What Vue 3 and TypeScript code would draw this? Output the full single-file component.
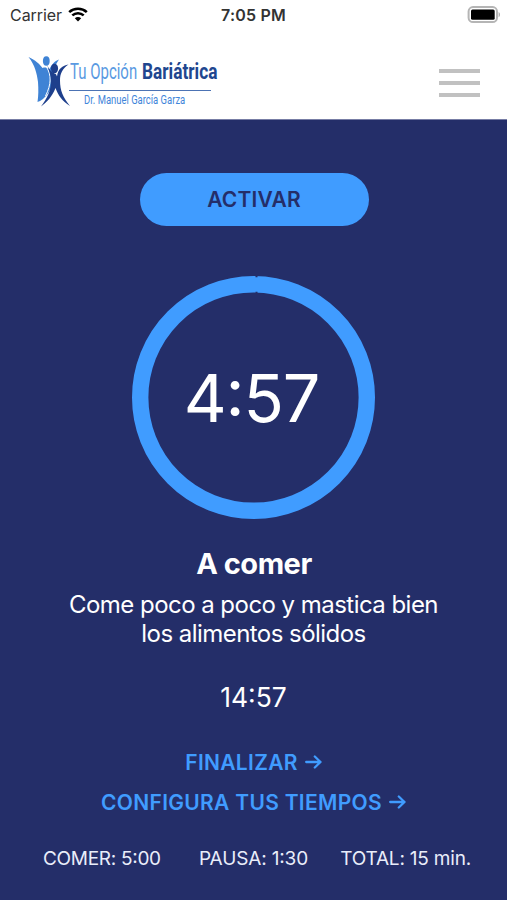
<script setup lang="ts">
import { ref } from 'vue'

interface Setting {
  key: string
  label: string
  value: string
}

const remaining = ref('4:57')
const total = ref('14:57')
const settings: Setting[] = [
  { key: 'eat', label: 'COMER', value: '5:00' },
  { key: 'pause', label: 'PAUSA', value: '1:30' },
  { key: 'whole', label: 'TOTAL', value: '15 min.' },
]

// Splits a clock value so that its colon can be centred on the digits.
const parts = (value: string): string[] => value.split(/(:)/)
</script>

<template>
  <div class="screen">
    <header class="header">
      <div class="status">
        <div class="carrier">
          <span>Carrier</span>
          <svg class="wifi" width="20" height="15" viewBox="0 0 20 15">
            <path d="M1.2 5.1C6 .7 14 .7 18.8 5.1" />
            <path d="M4.3 8.4c3.2-2.9 8.2-2.9 11.4 0" />
            <path class="dot" d="M6.8 11.2c1.8-1.6 4.6-1.6 6.4 0L10 14.4z" />
          </svg>
        </div>
        <span class="clock">7:05 PM</span>
        <svg class="battery" width="34" height="18" viewBox="0 0 34 18">
          <rect class="shell" x="1.6" y="1.1" width="28.4" height="15" rx="4.4" />
          <rect x="4" y="3.500" width="23.700" height="10.200" rx="1.500" />
          <path class="cap" d="M31.600 6c1.800.9 1.800 4.300 0 5.200z" />
        </svg>
      </div>
      <div class="nav">
        <div class="brand">
          <svg class="figures" width="42" height="53" viewBox="0 0 42 53">
            <g class="figure-light">
              <path d="M.5 2c7 3 11 7 14 11 3-1 5 0 7 1 2-4 5-8 9.500-9.500-2 3-4 6-5 10v12c-3 9-7 14-11 17.500-2 1.500-4 2.500-5.500 3 1-6 1-13 .5-20C9 19 7 10 .5 2z" />
              <ellipse cx="18.300" cy="6" rx="3.400" ry="4.700" />
            </g>
            <path class="gap" d="M18.500 12c5 8 5 17-1 29" />
            <g class="figure-dark">
              <ellipse cx="26.500" cy="13.500" rx="3.600" ry="4.800" />
              <path d="M19 10c2 4 4 7 7.500 8.500 1.500 0 2 1.500 2.500 3 1-8 5.500-11 11.500-12-6 4-8.500 9-8.500 16 0 10 3 17 10 25.500-8-5-12-11-14.500-18C24 42 19 47 13 51.500c6-8 10-16 10-25C23 20 21 15 19 10z" />
            </g>
          </svg>
          <div class="wordmark">
            <div class="name"><span class="thin">Tu Opción</span><b>Bariátrica</b></div>
            <span class="rule"></span>
            <span class="doctor">Dr. Manuel García Garza</span>
          </div>
        </div>
        <button class="menu" aria-label="Menú"><i /><i /><i /></button>
      </div>
    </header>

    <main class="content">
      <button class="activate">ACTIVAR</button>
      <div class="timer">
        <svg class="ring" width="243" height="243" viewBox="0 0 243 243">
          <circle cx="121.500" cy="121.500" r="113.300" />
          <path d="M124.500 0v1.200M124.500 15.800v1.200" />
        </svg>
        <span class="remaining"><span v-for="(p, i) in parts(remaining)" :key="i" :class="{ colon: p === ':' }">{{ p }}</span></span>
      </div>
      <h1 class="title">A comer</h1>
      <p class="hint">Come poco a poco y mastica bien<br />los alimentos sólidos</p>
      <div class="total"><span v-for="(p, i) in parts(total)" :key="i" :class="{ colon: p === ':' }">{{ p }}</span></div>
      <button class="link finish">
        <span>FINALIZAR</span>
        <svg width="17" height="14" viewBox="0 0 17 14"><path d="M1.200 7H15.500M9.800 1.500l5.700 5.500-5.700 5.500" /></svg>
      </button>
      <button class="link configure">
        <span>CONFIGURA TUS TIEMPOS</span>
        <svg width="17" height="14" viewBox="0 0 17 14"><path d="M1.200 7H15.500M9.800 1.500l5.700 5.500-5.700 5.500" /></svg>
      </button>
      <footer class="settings">
        <span v-for="s in settings" :key="s.key" :class="s.key">{{ s.label }}: <span v-for="(p, i) in parts(s.value)" :key="i" :class="{ colon: p === ':' }">{{ p }}</span></span>
      </footer>
    </main>
  </div>
</template>

<style>
body {
  margin: 0;
  background: #242e69;
}
</style>

<style scoped>
.screen {
  width: 507px;
  height: 900px;
  overflow: hidden;
  display: flex;
  flex-direction: column;
  font-family: Inter, sans-serif;
  background: #242e69;
}
button {
  border: 0;
  padding: 0;
  background: none;
  font: inherit;
}
.header {
  flex: none;
  height: 120px;
  box-sizing: border-box;
  background: #fff;
  border-bottom: 1px solid #777da5;
}
.status {
  height: 30px;
  display: grid;
  grid-template-columns: 1fr auto 1fr;
  align-items: center;
  padding: 0 6px 0 10px;
  color: #333;
  font-size: 16px;
  line-height: 30px;
}
.carrier {
  display: flex;
  align-items: center;
  gap: 6px;
  letter-spacing: -0.05px;
}
.wifi {
  margin-top: -2px;
  fill: none;
  stroke: #000;
  stroke-width: 2.6;
}
.wifi .dot {
  fill: #000;
  stroke: none;
}
.clock {
  font-weight: 600;
  letter-spacing: 0.2px;
  margin-right: 4px;
}
.battery {
  justify-self: end;
  margin-top: -1px;
}
.battery .shell {
  fill: none;
  stroke: #b5b5b5;
  stroke-width: 2;
}
.battery .cap {
  fill: #aaa;
}
.nav {
  display: flex;
  justify-content: space-between;
  align-items: flex-start;
  padding: 25px 27px 0 28px;
}
.brand {
  display: flex;
  align-items: flex-start;
}
.figures {
  flex: none;
}
.figure-light {
  fill: #3f83d5;
}
.figure-dark {
  fill: #1e3f8c;
}
.gap {
  fill: none;
  stroke: #fff;
  stroke-width: 1;
}
.wordmark {
  width: 150px;
  display: flex;
  flex-direction: column;
  align-items: flex-start;
  font-family: Roboto, sans-serif;
  white-space: nowrap;
}
.name {
  display: flex;
  font-size: 22px;
  line-height: 26px;
  padding-top: 4px;
  color: #21468f;
}
.name b {
  transform: scaleX(0.785);
  transform-origin: 0 0;
}
.thin {
  width: 72px;
  font-weight: 400;
  color: #5a9ae2;
  transform: scaleX(0.68);
  transform-origin: 0 0;
}
.rule {
  width: 142px;
  height: 1px;
  margin-top: 5px;
  margin-left: -1px;
  background: #4c73b4;
}
.doctor {
  margin-left: 14px;
  font-size: 13.500px;
  line-height: 16px;
  color: #3f86da;
  transform: scaleX(0.7);
  transform-origin: 0 0;
}
.menu {
  display: flex;
  flex-direction: column;
  gap: 8px;
  margin-top: 14px;
}
.menu i {
  width: 41px;
  height: 4px;
  background: #c1c1c1;
}
.content {
  display: flex;
  flex-direction: column;
  align-items: center;
  padding-top: 53px;
  color: #fff;
}
.activate {
  width: 229px;
  height: 53px;
  margin-left: 2px;
  padding-right: 1px;
  border-radius: 27px;
  background: #409cff;
  color: #242e69;
  font-size: 21px;
  font-weight: 600;
  letter-spacing: 0.2px;
}
.timer {
  display: grid;
  place-items: center;
  margin-top: 50px;
}
.ring,
.remaining {
  grid-area: 1 / 1;
}
.ring circle {
  fill: none;
  stroke: #409cff;
  stroke-width: 16.400;
}
.ring path {
  stroke: #242e69;
  stroke-width: 2;
}
.colon {
  position: relative;
  top: -0.09em;
}
.remaining {
  font-size: 66.500px;
  line-height: 80px;
  letter-spacing: -1.200px;
  margin-right: 4px;
}
.title {
  margin: 27px 0 0 1px;
  font-size: 29px;
  line-height: 36px;
  font-weight: 700;
  letter-spacing: -0.500px;
}
.hint {
  margin: 8px 0 0;
  text-align: center;
  font-size: 24px;
  line-height: 29px;
  letter-spacing: -0.540px;
}
.total {
  margin-top: 31px;
  font-size: 26.500px;
  line-height: 36px;
}
.link {
  display: flex;
  align-items: center;
  gap: 7px;
  height: 40px;
  color: #409cff;
  font-size: 21px;
  font-weight: 600;
  letter-spacing: 0.300px;
}
.link svg {
  fill: none;
  stroke: #409cff;
  stroke-width: 2.300;
  stroke-linecap: round;
  stroke-linejoin: round;
}
.finish {
  margin-top: 27px;
}
.settings {
  align-self: stretch;
  display: flex;
  justify-content: space-between;
  margin-top: 25px;
  padding: 0 36px 0 43px;
  font-size: 19px;
  line-height: 24px;
  letter-spacing: -0.300px;
  color: #e9edfa;
}
.pause {
  margin-left: 6px;
  letter-spacing: -0.150px;
}
.whole {
  letter-spacing: -0.200px;
}
</style>
